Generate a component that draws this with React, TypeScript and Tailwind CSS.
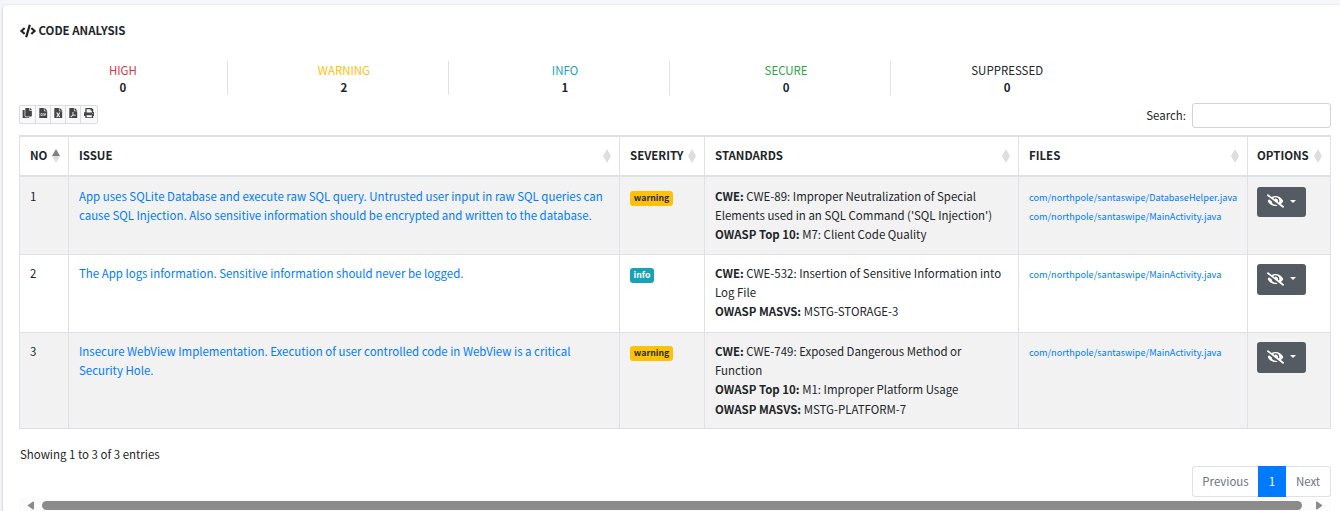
import type { ReactNode } from "react";
import {
  FaCode,
  FaCopy,
  FaEyeSlash,
  FaFileCsv,
  FaFileExcel,
  FaFilePdf,
  FaPrint,
} from "react-icons/fa";

const stats = [
  { label: "HIGH", value: 0, color: "text-[#dc3545]" },
  { label: "WARNING", value: 2, color: "text-[#ffc107]" },
  { label: "INFO", value: 1, color: "text-[#17a2b8]" },
  { label: "SECURE", value: 0, color: "text-[#28a745]" },
  { label: "SUPPRESSED", value: 0, color: "text-[#212529]" },
];

const exportIcons = [FaCopy, FaFileCsv, FaFileExcel, FaFilePdf, FaPrint];

const columns = ["NO", "ISSUE", "SEVERITY", "STANDARDS", "FILES", "OPTIONS"];

type Line = { label?: string; text: string };

const findings: {
  issue: string[];
  severity: "warning" | "info";
  standards: Line[];
  files: string[];
  height: string;
}[] = [
  {
    issue: [
      "App uses SQLite Database and execute raw SQL query. Untrusted user input in raw SQL queries can",
      "cause SQL Injection. Also sensitive information should be encrypted and written to the database.",
    ],
    severity: "warning",
    standards: [
      { label: "CWE:", text: "CWE-89: Improper Neutralization of Special" },
      { text: "Elements used in an SQL Command ('SQL Injection')" },
      { label: "OWASP Top 10:", text: "M7: Client Code Quality" },
    ],
    files: ["com/northpole/santaswipe/DatabaseHelper.java", "com/northpole/santaswipe/MainActivity.java"],
    height: "h-[78px]",
  },
  {
    issue: ["The App logs information. Sensitive information should never be logged."],
    severity: "info",
    standards: [
      { label: "CWE:", text: "CWE-532: Insertion of Sensitive Information into" },
      { text: "Log File" },
      { label: "OWASP MASVS:", text: "MSTG-STORAGE-3" },
    ],
    files: ["com/northpole/santaswipe/MainActivity.java"],
    height: "h-[78px]",
  },
  {
    issue: [
      "Insecure WebView Implementation. Execution of user controlled code in WebView is a critical",
      "Security Hole.",
    ],
    severity: "warning",
    standards: [
      { label: "CWE:", text: "CWE-749: Exposed Dangerous Method or" },
      { text: "Function" },
      { label: "OWASP Top 10:", text: "M1: Improper Platform Usage" },
      { label: "OWASP MASVS:", text: "MSTG-PLATFORM-7" },
    ],
    files: ["com/northpole/santaswipe/MainActivity.java"],
    height: "h-[96px]",
  },
];

function SortIcon({ active }: { active?: boolean }) {
  return (
    <svg viewBox="0 0 8 14" className="h-[14px] w-[8px] shrink-0">
      <path d="M4 0L8 7H0Z" fill={active ? "#7d7f81" : "#dedede"} />
      <path d="M4 14L8 7H0Z" fill="#dedede" />
    </svg>
  );
}

function Cell({ children }: { children: ReactNode }) {
  return (
    <td className="border-b border-l border-[#dee2e6] px-[10px] pt-[9px] align-top last:border-r last:pl-[9px] group-first:pt-[10px]">
      {children}
    </td>
  );
}

export default function App() {
  return (
    <div className="h-[511px] w-[1340px] overflow-hidden bg-[#f4f6f9] pl-[3px] pt-[5px] font-['Noto_Sans_CJK_SC',sans-serif] text-[11.46px] leading-[19.2px] text-[#212529]">
      <div className="flex h-[520px] w-[1353px] flex-col rounded-[4px] bg-white pl-4 shadow-[0_0_1px_rgba(0,0,0,0.125),0_1px_3px_rgba(0,0,0,0.2)]">
        <div className="flex w-[1312px] flex-col">
          <h1 className="mt-[16px] flex h-[20px] items-center gap-[3px] pl-[0.5px] font-bold">
            <FaCode className="-mt-[1px] size-[16px]" />
            CODE ANALYSIS
          </h1>

          <div className="mt-[20px] flex h-[34px] w-[1092px] gap-[12.4px]">
            {stats.map((s) => (
              <div
                key={s.label}
                className="flex flex-1 basis-0 flex-col items-center border-r border-[#dee2e6] pt-[1px] leading-[17px] last:border-r-0"
              >
                <span className={s.color}>{s.label}</span>
                <span className="font-bold">{s.value}</span>
              </div>
            ))}
          </div>

          <div className="mt-[8px] flex h-[25px] justify-between">
            <div className="mt-[2px] flex h-[19px] rounded-[2px] border border-[#ddd] bg-[#f8f9fa] text-[#444]">
              {exportIcons.map((Icon, i) => (
                <button
                  key={i}
                  className="flex w-[15px] items-center justify-center border-r border-[#ddd] pb-[3px] first:w-[16px] last:w-[16px] last:border-r-0"
                >
                  <Icon className="size-[10.5px]" />
                </button>
              ))}
            </div>
            <label className="flex gap-[6px] leading-[24px]">
              Search:
              <input className="h-[25px] w-[139px] rounded-[3px] border border-[#ced4da] bg-white" />
            </label>
          </div>

          <table className="mt-[7px] w-[1312px] table-fixed border-separate border-spacing-0 whitespace-nowrap">
            <colgroup>
              <col className="w-[49px]" />
              <col className="w-[551px]" />
              <col className="w-[85px]" />
              <col className="w-[314px]" />
              <col className="w-[229px]" />
              <col className="w-[84px]" />
            </colgroup>
            <thead>
              <tr className="h-[42px]">
                {columns.map((c, i) => (
                  <th
                    key={c}
                    className="border-y-2 border-l border-[#dee2e6] pl-[10px] pr-[8.5px] text-left align-middle font-bold last:border-r last:pl-[9px]"
                  >
                    <div className="flex items-center justify-between">
                      {c}
                      <SortIcon active={i === 0} />
                    </div>
                  </th>
                ))}
              </tr>
            </thead>
            <tbody>
              {findings.map((f, i) => (
                <tr key={i} className={`group ${f.height} odd:bg-[#f2f2f2]`}>
                  <Cell>{i + 1}</Cell>
                  <Cell>
                    {f.issue.map((l) => (
                      <div key={l} className="text-[#007bff]">{l}</div>
                    ))}
                  </Cell>
                  <Cell>
                    <span
                      className={
                        f.severity === "warning"
                          ? "mt-[4px] block h-[15px] w-[43px] rounded-[3px] bg-[#ffc107] text-center text-[8.7px] font-bold leading-[14px] text-[#1f2d3d]"
                          : "mt-[4px] block h-[15px] w-[24px] rounded-[3px] bg-[#17a2b8] text-center text-[8.7px] font-bold leading-[13px] text-white"
                      }
                    >
                      {f.severity}
                    </span>
                  </Cell>
                  <Cell>
                    {f.standards.map((s) => (
                      <div key={s.text}>
                        {s.label && <b className="font-bold">{s.label} </b>}
                        {s.text}
                      </div>
                    ))}
                  </Cell>
                  <Cell>
                    <div className="pt-[1px]">
                      {f.files.map((p) => (
                        <div key={p} className="text-[9.16px] text-[#007bff]">{p}</div>
                      ))}
                    </div>
                  </Cell>
                  <Cell>
                    <button className="flex h-[30px] w-[49px] items-center justify-center gap-[6px] rounded-[3px] bg-[#545b62] pb-[2px] text-white group-even:h-[31px] group-last:h-[31px]">
                      <FaEyeSlash className="h-[14px] w-[17px]" />
                      <svg viewBox="0 0 6 3" className="h-[3px] w-[6px]">
                        <path d="M0 0H6L3 3Z" fill="currentColor" />
                      </svg>
                    </button>
                  </Cell>
                </tr>
              ))}
            </tbody>
          </table>

          <p className="mt-[16px] h-[20px] pl-[1px]">Showing 1 to 3 of 3 entries</p>

          <nav className="mt-[1px] flex h-[31px] self-end text-[#6c757d]">
            <span className="flex w-[66px] items-center justify-center rounded-l-[3px] border border-r-0 border-[#dee2e6]">Previous</span>
            <span className="flex w-[28px] items-center justify-center bg-[#007bff] text-white">1</span>
            <span className="flex w-[45px] items-center justify-center rounded-r-[3px] border border-l-0 border-[#dee2e6]">Next</span>
          </nav>

          <div className="mt-[1px] flex h-[15px] items-center bg-[#fcfcfc] pl-[8px]">
            <svg viewBox="0 0 7 9" className="h-[9px] w-[7px]">
              <path d="M6 0.6L1 4Q0.4 4.5 1 5L6 8.4Q7 8.8 7 7.8V1.2Q7 0.2 6 0.6Z" fill="#8b8b8b" />
            </svg>
            <div className="ml-[8px] h-[9px] w-[1260px] rounded-full bg-[#8b8b8b]" />
            <svg viewBox="0 0 7 9" className="ml-[14px] h-[9px] w-[7px]">
              <path d="M1 0.6L6 4Q6.6 4.5 6 5L1 8.4Q0 8.8 0 7.8V1.2Q0 0.2 1 0.6Z" fill="#8b8b8b" />
            </svg>
          </div>
        </div>
      </div>
    </div>
  );
}
